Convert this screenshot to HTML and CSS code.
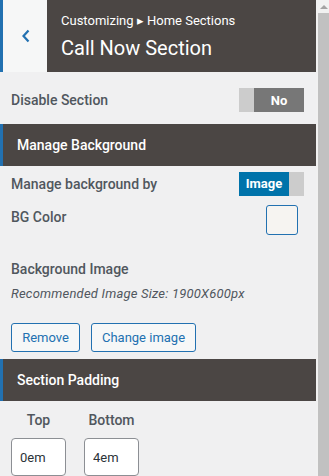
FILE: index.html
```html
<!DOCTYPE html>
<html lang="en">

<head>
    <meta charset="UTF-8">
    <meta name="viewport" content="width=device-width, initial-scale=1.0">
    <title>Call Now Section</title>
    <link rel="stylesheet" href="styles.css">
</head>

<body>
    <div class="panel">
        <div class="head">
            <div class="back">
                <svg width="10" height="14" viewBox="0 0 10 14"><path d="M7.5 1.5 L2.5 7 L7.5 12.5" fill="none" stroke="#2271b1" stroke-width="2.2"/></svg>
            </div>
            <div class="head-title">
                <div class="crumb">Customizing &#9656; Home Sections</div>
                <div class="title">Call Now Section</div>
            </div>
        </div>

        <div class="row row-disable">
            <span class="label">Disable Section</span>
            <div class="toggle toggle-off"><span class="knob"></span><span class="val">No</span></div>
        </div>

        <div class="sect">Manage Background</div>

        <div class="row row-by">
            <span class="label">Manage background by</span>
            <div class="toggle toggle-on"><span class="val">Image</span><span class="knob"></span></div>
        </div>

        <div class="row row-color">
            <span class="label">BG Color</span>
            <div class="swatch"></div>
        </div>

        <div class="bg-image">
            <div class="label">Background Image</div>
            <div class="hint">Recommended Image Size: 1900X600px</div>
            <div class="buttons">
                <button class="btn btn-remove">Remove</button>
                <button class="btn btn-change">Change image</button>
            </div>
        </div>

        <div class="sect">Section Padding</div>

        <div class="pads">
            <div class="pad">
                <span class="label">Top</span>
                <input type="text" value="0em">
            </div>
            <div class="pad">
                <span class="label">Bottom</span>
                <input type="text" value="4em">
            </div>
        </div>
    </div>
    <div class="scrollbar">
        <div class="arrow"></div>
        <div class="thumb"></div>
    </div>
</body>

</html>
```
FILE: styles.css
```css
html, body {
    margin: 0;
    height: 100%;
    overflow: hidden;
}

body {
    display: flex;
    background: #f0f0f1;
    font-family: Roboto, "Liberation Sans", sans-serif;
    color: #50575e;
}

.panel {
    width: 316px;
    flex: none;
}

.head {
    display: flex;
    height: 72px;
}

.back {
    width: 47px;
    border-left: 3px solid #2271b1;
    background: #f6f7f7;
    display: flex;
    align-items: center;
    justify-content: center;
    padding-left: 1px;
    box-sizing: border-box;
}

.head-title {
    flex: 1;
    background: #4b4644;
    color: #fff;
    padding: 13px 0 0 14px;
}

.crumb {
    font-size: 13px;
    line-height: 16px;
}

.title {
    font-size: 20px;
    line-height: 24px;
    margin-top: 7px;
}

.label {
    font-size: 14px;
    font-weight: 500;
    color: #50575e;
}

.row {
    display: flex;
    align-items: center;
    justify-content: space-between;
    padding: 0 12px 0 11px;
}

.row-disable {
    height: 52px;
    padding-top: 4px;
    box-sizing: border-box;
}

.toggle {
    display: flex;
    width: 65px;
    height: 24px;
    font-size: 13px;
    font-weight: 700;
    color: #fff;
}

.toggle .knob {
    width: 15px;
    background: #ccc;
}

.toggle .val {
    flex: 1;
    display: flex;
    align-items: center;
    justify-content: center;
}

.toggle-off .val {
    background: #777;
}

.toggle-on .val {
    background: #0073aa;
}

.sect {
    height: 42px;
    line-height: 42px;
    background: #4b4644;
    border-left: 3px solid #2271b1;
    color: #fff;
    font-size: 14px;
    font-weight: 500;
    padding-left: 14px;
}

.row-by {
    margin-top: 6px;
    height: 23px;
}

.row-by .label {
    margin-top: 1px;
}

.row-color {
    margin-top: 10px;
    align-items: flex-start;
    padding-right: 18px;
}

.row-color .label {
    margin-top: 4px;
}

.swatch {
    width: 30px;
    height: 28px;
    border: 1px solid #2271b1;
    border-radius: 3px;
    background: #f6f4f1;
}

.bg-image {
    padding: 26px 11px 0;
}

.hint {
    font-size: 13px;
    font-style: italic;
    letter-spacing: 0.2px;
    margin-top: 9px;
}

.buttons {
    display: flex;
    gap: 11px;
    margin-top: 22px;
    padding-bottom: 7px;
}

.btn {
    height: 29px;
    border: 1px solid #2271b1;
    border-radius: 3px;
    background: #f6f7f7;
    color: #2271b1;
    font-family: Roboto, "Liberation Sans", sans-serif;
    font-size: 13px;
    padding: 0;
}

.btn-remove {
    width: 69px;
}

.btn-change {
    width: 105px;
}

.pads {
    display: flex;
    gap: 18px;
    padding: 11px 11px 0;
}

.pad {
    display: flex;
    flex-direction: column;
    align-items: center;
    gap: 10px;
}

.pad input {
    width: 55px;
    height: 38px;
    box-sizing: border-box;
    border: 1px solid #8c8f94;
    border-radius: 4px;
    background: #fff;
    font-family: Roboto, "Liberation Sans", sans-serif;
    font-size: 13px;
    color: #2c3338;
    padding: 0 8px;
    margin: 0;
}

.scrollbar {
    flex: 1;
    display: flex;
    flex-direction: column;
    background: #f1f1f1;
}

.arrow {
    height: 13px;
    display: flex;
    align-items: center;
    justify-content: center;
}

.arrow::before {
    content: "";
    border-left: 4px solid transparent;
    border-right: 4px solid transparent;
    border-bottom: 4px solid #a3a3a3;
    margin-left: 2px;
}

.thumb {
    flex: 1;
    margin-left: 2px;
    background: #c1c1c1;
}
```
